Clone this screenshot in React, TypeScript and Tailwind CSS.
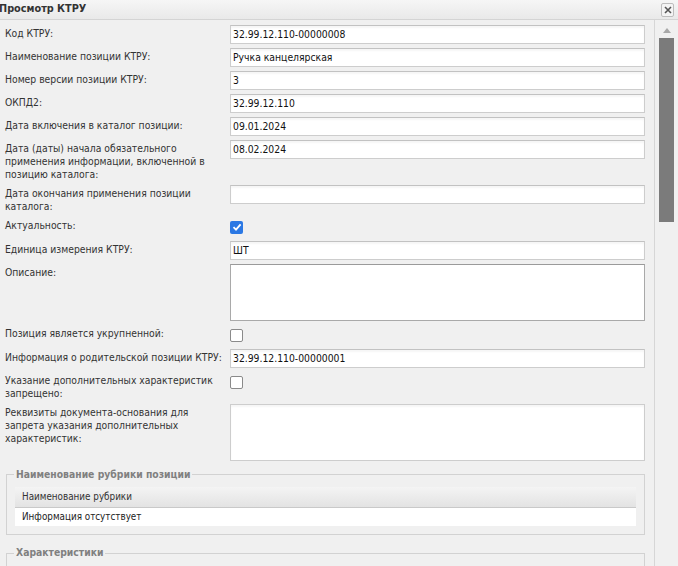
import React from 'react';

type Row =
  | { kind: 'input'; label: string; value?: string }
  | { kind: 'area'; label: string; dark?: boolean }
  | { kind: 'check'; label: string; checked?: boolean };

const rows: Row[] = [
  { kind: 'input', label: 'Код КТРУ:', value: '32.99.12.110-00000008' },
  { kind: 'input', label: 'Наименование позиции КТРУ:', value: 'Ручка канцелярская' },
  { kind: 'input', label: 'Номер версии позиции КТРУ:', value: '3' },
  { kind: 'input', label: 'ОКПД2:', value: '32.99.12.110' },
  { kind: 'input', label: 'Дата включения в каталог позиции:', value: '09.01.2024' },
  {
    kind: 'input',
    label: 'Дата (даты) начала обязательного применения информации, включенной в позицию каталога:',
    value: '08.02.2024',
  },
  { kind: 'input', label: 'Дата окончания применения позиции каталога:' },
  { kind: 'check', label: 'Актуальность:', checked: true },
  { kind: 'input', label: 'Единица измерения КТРУ:', value: 'ШТ' },
  { kind: 'area', label: 'Описание:', dark: true },
  { kind: 'check', label: 'Позиция является укрупненной:' },
  { kind: 'input', label: 'Информация о родительской позиции КТРУ:', value: '32.99.12.110-00000001' },
  { kind: 'check', label: 'Указание дополнительных характеристик запрещено:' },
  { kind: 'area', label: 'Реквизиты документа-основания для запрета указания дополнительных характеристик:' },
];

const Checkbox = ({ checked }: { checked?: boolean }) =>
  checked ? (
    <span className="flex h-[13px] w-[13px] items-center justify-center rounded-[2px] bg-[#2b78e4]">
      <svg width="10" height="10" viewBox="0 0 10 10">
        <path d="M1.5 5.2 L4 7.6 L8.6 2.4" fill="none" stroke="#fff" strokeWidth="1.8" />
      </svg>
    </span>
  ) : (
    <span className="block h-[13px] w-[13px] rounded-[2px] border border-[#8a8a8a] bg-white" />
  );

function Field({ row }: { row: Row }) {
  return (
    <>
      <div className="pt-[2px] pr-[3px] leading-[13px] text-[#333]">{row.label}</div>
      {row.kind === 'input' && (
        <div className="flex h-[19px] items-center border border-[#cdcdcd] border-t-[#c2c2c2] bg-white px-[2px] text-[#111] shadow-[inset_0_2px_2px_rgba(0,0,0,0.04)]">
          {row.value}
        </div>
      )}
      {row.kind === 'area' && (
        <div
          className={
            row.dark
              ? 'h-[57px] border border-[#a9a9a9] border-t-[#9a9a9a] bg-white'
              : 'h-[57px] border border-[#cdcdcd] bg-white shadow-[inset_0_2px_2px_rgba(0,0,0,0.04)]'
          }
        />
      )}
      {row.kind === 'check' && (
        <div className="flex h-[20px] items-center">
          <Checkbox checked={row.checked} />
        </div>
      )}
    </>
  );
}

function Group({ title, children }: { title: string; children?: React.ReactNode }) {
  return (
    <fieldset className="mr-[9px] ml-[6px] border border-[#d2d2d2] px-[8px] pb-[8px]">
      <legend className="ml-[-1px] px-[2px] font-bold text-[#808080]">{title}</legend>
      {children}
    </fieldset>
  );
}

export default function App() {
  return (
    <div
      className="flex h-[566px] w-[678px] flex-col overflow-hidden bg-[#f0f0f0] text-[10.3px]"
      style={{ fontFamily: '"DejaVu Sans Condensed", "DejaVu Sans", sans-serif' }}
    >
      <div className="flex h-[20px] shrink-0 items-center justify-between border-b border-[#d4d4d4] bg-gradient-to-b from-[#f6f6f6] to-[#e9e9e9]">
        <span className="ml-[-1px] text-[10.8px] font-bold text-[#333]">Просмотр КТРУ</span>
        <span className="mr-[4px] flex h-[14px] w-[13px] items-center justify-center rounded-[2px] border border-[#bdbdbd] bg-[#f4f4f4]">
          <svg width="8" height="8" viewBox="0 0 8 8">
            <path d="M1 1 L7 7 M7 1 L1 7" stroke="#555" strokeWidth="1.6" />
          </svg>
        </span>
      </div>

      <div className="flex min-h-0 flex-1">
        <div className="flex-1 overflow-hidden pt-[5px]">
          <div className="grid grid-cols-[225px_1fr] gap-y-[4px] pr-[9px] pl-[5px]">
            {rows.map((r, i) => (
              <Field key={i} row={r} />
            ))}
          </div>

          <div className="mt-[6px] flex flex-col gap-[10px]">
            <Group title="Наименование рубрики позиции">
              <div className="mt-[5px]">
                <div className="flex h-[21px] items-center border-b border-[#c9c9c9] bg-gradient-to-b from-[#f4f4f4] to-[#e3e3e3] px-[7px] text-[9.8px] text-[#333]">
                  Наименование рубрики
                </div>
                <div className="flex h-[18px] items-center bg-white px-[7px] text-[9.8px] text-[#222]">
                  Информация отсутствует
                </div>
              </div>
            </Group>
            <Group title="Характеристики">
              <div className="h-[40px]" />
            </Group>
          </div>
        </div>

        <div className="flex w-[24px] shrink-0 flex-col items-center border-l border-[#d6d6d6] pt-[8px]">
          <svg width="8" height="5" viewBox="0 0 8 5">
            <path d="M0 5 L4 0 L8 5 Z" fill="#a8a8a8" />
          </svg>
          <div className="mt-[5px] h-[184px] w-[15px] bg-[#7b7b7b]" />
        </div>
      </div>
    </div>
  );
}
